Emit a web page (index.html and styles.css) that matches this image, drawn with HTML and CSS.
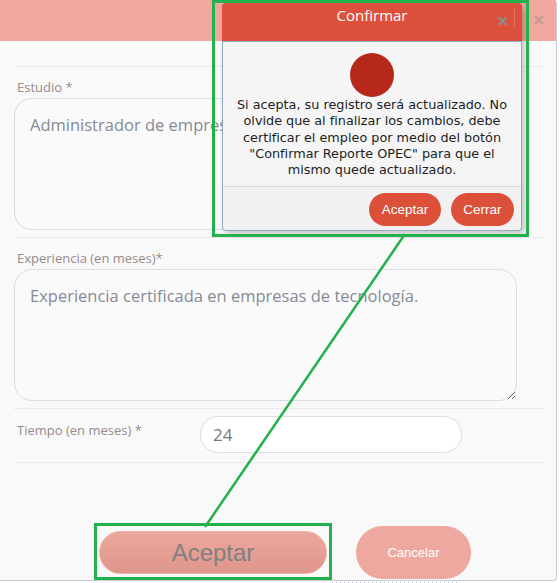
FILE: index.html
```html
<!DOCTYPE html>
<html lang="es">
<head>
    <meta charset="UTF-8">
    <meta name="viewport" content="width=device-width, initial-scale=1.0">
    <title>Editar estudio</title>
    <link rel="stylesheet" href="styles.css">
</head>
<body>

<div class="dialog">
    <div class="dialog-header">
        <span class="dialog-close">
            <svg width="10" height="10" viewBox="0 0 10 10"><path d="M1 1 L9 9 M9 1 L1 9" stroke="#c49a95" stroke-width="2.2"/></svg>
        </span>
    </div>

    <div class="dialog-body">
        <hr class="sep">

        <div class="field">
            <label class="field-label">Estudio *</label>
            <textarea class="field-area" readonly>Administrador de empresas</textarea>
        </div>
        <hr class="sep">

        <div class="field">
            <label class="field-label">Experiencia (en meses)*</label>
            <textarea class="field-area" readonly>Experiencia certificada en empresas de tecnología.</textarea>
        </div>
        <hr class="sep">

        <div class="field-row">
            <label class="field-label row-label">Tiempo (en meses) *</label>
            <input class="field-input" type="text" value="24" readonly>
        </div>
        <hr class="sep">

        <div class="dialog-footer">
            <button class="btn-main">Aceptar</button>
            <button class="btn-cancel">Cancelar</button>
        </div>
    </div>
</div>
<div class="page-strip"></div>

<!-- confirm modal on top -->
<div class="confirm">
    <div class="confirm-header">
        <span class="confirm-title">Confirmar</span>
        <span class="confirm-close">
            <svg width="11" height="10" viewBox="0 0 11 10"><path d="M1.5 1 L9.5 9 M9.5 1 L1.5 9" stroke="#8c8c8c" stroke-width="2.4"/></svg>
        </span>
    </div>
    <div class="confirm-body">
        <div class="confirm-dot"></div>
        <p class="confirm-text">Si acepta, su registro será actualizado. No olvide que al finalizar los cambios, debe certificar el empleo por medio del botón "Confirmar Reporte OPEC" para que el mismo quede actualizado.</p>
    </div>
    <div class="confirm-footer">
        <button class="btn-red btn-ok">Aceptar</button>
        <button class="btn-red btn-close">Cerrar</button>
    </div>
</div>

<!-- annotation marks -->
<div class="mark mark-modal"></div>
<div class="mark mark-button"></div>
<svg class="mark-line" width="560" height="583" viewBox="0 0 560 583">
    <line x1="405" y1="234" x2="205" y2="527" stroke="#22b14c" stroke-width="2.5"/>
</svg>

</body>
</html>
```

FILE: styles.css
```css
body {
    margin: 0;
    width: 560px;
    height: 583px;
    overflow: hidden;
    background-color: #ffffff;
    font-family: "Open Sans", sans-serif;
    position: relative;
}

/* underlying dialog */
.dialog {
    width: 556px;
    height: 580px;
    border-right: 1px solid #c5cad3;
    border-bottom: 1px solid #c5cad3;
    border-radius: 0 4px 4px 0;
    background-color: #f9f9fa;
    display: flex;
    flex-direction: column;
}
.dialog-header {
    height: 41px;
    background-color: #f0a89f;
    display: flex;
    justify-content: flex-end;
    align-items: flex-start;
    flex-shrink: 0;
}
.dialog-close {
    margin: 8px 12px 0 0;
}
.dialog-body {
    padding: 0 12px 0 14px;
}
.sep {
    margin: 0;
    border: none;
    border-top: 1px solid #e8e8ec;
}
.sep:first-child {
    margin-top: 25px;
}
.field {
    display: flex;
    flex-direction: column;
    padding-top: 11px;
    padding-bottom: 7px;
}
.field-label {
    font-size: 13px;
    line-height: 18px;
    color: #958b89;
    padding-left: 3px;
}
.field-area {
    margin-top: 2px;
    width: 503px;
    height: 132px;
    box-sizing: border-box;
    border: 1px solid #dcdce3;
    border-radius: 18px;
    background-color: #fafafb;
    padding: 14px 15px;
    font-family: "Open Sans", sans-serif;
    font-size: 16.5px;
    color: #858a94;
    outline: none;
}
.field-row {
    display: flex;
    align-items: flex-start;
    padding: 7px 0 9px;
}
.row-label {
    width: 183px;
    padding-top: 5px;
}
.field-input {
    width: 262px;
    height: 37px;
    box-sizing: border-box;
    border: 1px solid #dcdce3;
    border-radius: 19px;
    background-color: #ffffff;
    padding: 0 12px;
    font-family: "Open Sans", sans-serif;
    font-size: 17px;
    color: #777777;
    outline: none;
}
.dialog-footer {
    display: flex;
    align-items: center;
    gap: 29px;
    height: 53px;
    margin-top: 63px;
    padding-left: 85px;
}
.btn-main {
    width: 228px;
    height: 43px;
    border: 1px solid #eeb1a9;
    border-radius: 22px;
    background: linear-gradient(#eca89e, #df958b);
    font-family: "Liberation Sans", Arial, sans-serif;
    font-size: 24px;
    color: #808080;
}
.btn-cancel {
    width: 115px;
    height: 53px;
    border: none;
    border-radius: 27px;
    background-color: #eea89f;
    font-family: "Liberation Sans", Arial, sans-serif;
    font-size: 13px;
    color: #ffffff;
}
.page-strip {
    margin: 1px 0 0 332px;
    width: 128px;
    height: 2px;
    background: repeating-linear-gradient(90deg, #8a93a6 0 1px, transparent 1px 4px);
    opacity: 0.6;
}

/* confirm modal */
.confirm {
    position: absolute;
    left: 222px;
    top: 3px;
    width: 300px;
    height: 228px;
    box-sizing: border-box;
    border: 1px solid #8fa9c9;
    border-top: none;
    border-radius: 4px;
    background-color: #f5f5f5;
    box-shadow: 3px 3px 6px rgba(0, 0, 0, 0.22);
    display: flex;
    flex-direction: column;
}
.confirm-header {
    height: 38px;
    margin: 0 -1px;
    background-color: #dd503b;
    border-radius: 4px 4px 0 0;
    border-bottom: 1px solid #8fa9c9;
    position: relative;
    display: flex;
    justify-content: center;
    flex-shrink: 0;
}
.confirm-title {
    font-size: 15px;
    line-height: 25px;
    color: #ffffff;
}
.confirm-close {
    position: absolute;
    right: 7px;
    top: 6px;
    padding-right: 6px;
    border-right: 1px solid #e4725f;
    height: 18px;
}
.confirm-body {
    display: flex;
    flex-direction: column;
    align-items: center;
    padding-top: 11px;
}
.confirm-dot {
    width: 44px;
    height: 44px;
    border-radius: 50%;
    background-color: #b5281a;
}
.confirm-text {
    margin: 0;
    padding: 0 6px;
    text-align: center;
    font-family: "DejaVu Sans", Verdana, sans-serif;
    font-size: 12.8px;
    line-height: 16.25px;
    color: #1e1e1e;
}
.confirm-footer {
    margin-top: auto;
    border-top: 1px solid #d8d8d8;
    background-color: #f1f1f1;
    display: flex;
    justify-content: flex-end;
    gap: 10px;
    padding: 6px 7px 4px;
    border-radius: 0 0 4px 4px;
}
.btn-red {
    height: 33px;
    border: none;
    border-radius: 17px;
    background-color: #dc503a;
    font-family: "Liberation Sans", Arial, sans-serif;
    font-size: 13.5px;
    color: #ffffff;
}
.btn-ok {
    width: 72px;
}
.btn-close {
    width: 63px;
}

/* annotation marks */
.mark {
    position: absolute;
    border: 3px solid #22b14c;
    box-sizing: border-box;
}
.mark-modal {
    left: 212px;
    top: 0;
    width: 317px;
    height: 237px;
}
.mark-button {
    left: 94px;
    top: 523px;
    width: 238px;
    height: 57px;
}
.mark-line {
    position: absolute;
    left: 0;
    top: 0;
}
```
